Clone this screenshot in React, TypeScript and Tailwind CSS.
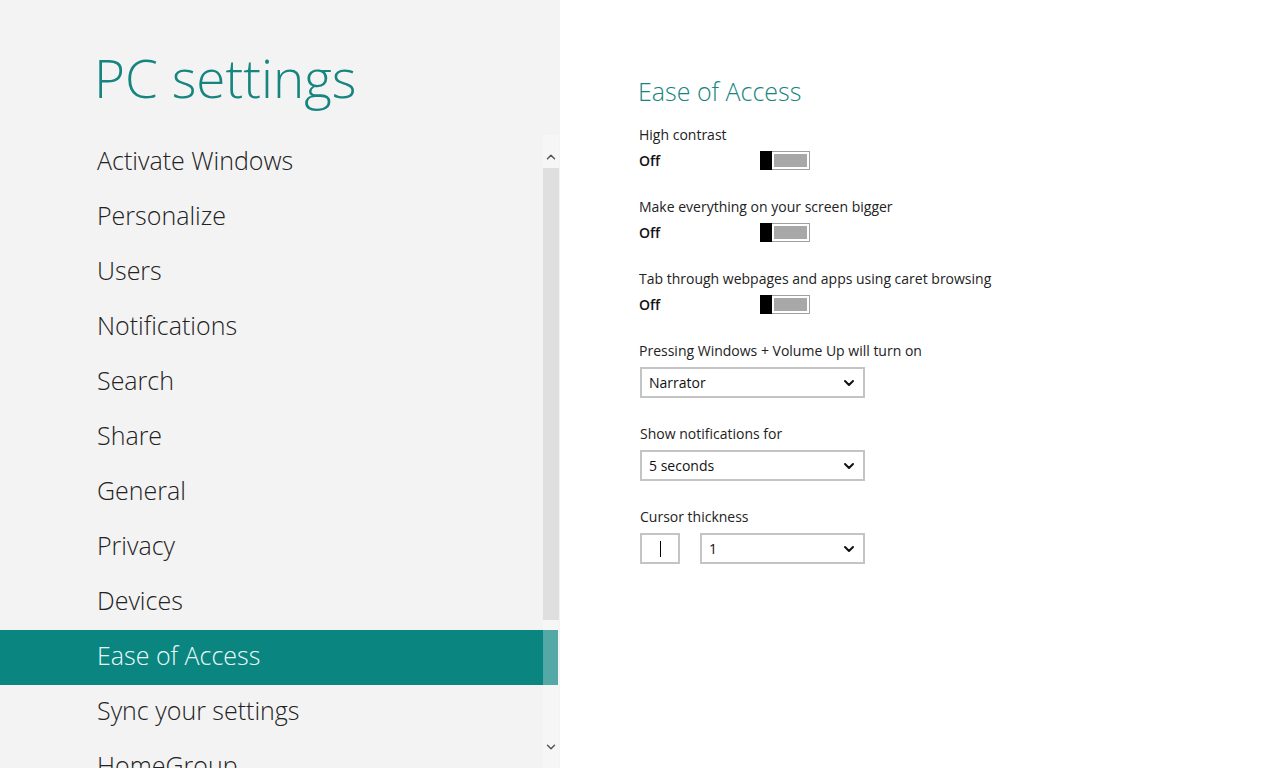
import { ChevronDown, ChevronUp } from 'lucide-react';

const menu = [
  'Activate Windows',
  'Personalize',
  'Users',
  'Notifications',
  'Search',
  'Share',
  'General',
  'Privacy',
  'Devices',
  'Ease of Access',
  'Sync your settings',
  'HomeGroup',
];

function Toggle() {
  return (
    <div className="flex items-center gap-[47px]">
      <span className="w-[74px] text-[14px] font-semibold text-[#111]">Off</span>
      <div className="flex h-[19px] w-[50px] border border-[#a0a0a0] bg-white">
        <div className="-ml-px -mt-px h-[19px] w-[12px] bg-black" />
        <div className="m-[2px] flex-1 bg-[#a8a8a8]" />
      </div>
    </div>
  );
}

function Select({ value, width }: { value: string; width: string }) {
  return (
    <div className={`flex h-[31px] items-center justify-between border-2 border-[#c4c4c4] bg-white pl-[7px] pr-[6px] text-[14px] text-[#111] ${width}`}>
      <span>{value}</span>
      <ChevronDown size={16} strokeWidth={3} className="text-[#111]" />
    </div>
  );
}

export default function App() {
  return (
    <div className="flex h-[768px] w-[1280px] overflow-hidden bg-white font-['Open_Sans',sans-serif]">
      {/* Left navigation */}
      <div className="relative flex w-[560px] shrink-0 flex-col bg-[#f3f3f3]">
        <div className="h-[135px] shrink-0 pl-[94px] pt-[44px]">
          <h1 className="text-[53px] font-light leading-[68px] text-[#16857f]">PC settings</h1>
        </div>
        <div className="w-[558px] shrink-0">
          {menu.map((item) => (
            <div
              key={item}
              className={
                item === 'Ease of Access'
                  ? 'flex h-[55px] items-center bg-[#0b8580] pb-[3px] pl-[97px] text-[25px] font-light text-[#eafafa]'
                  : 'flex h-[55px] items-center pb-[3px] pl-[97px] text-[25px] font-light text-[#222]'
              }
            >
              {item}
            </div>
          ))}
        </div>

        {/* Scrollbar overlay */}
        <div className="absolute bottom-0 left-[543px] top-[135px] flex w-[16px] flex-col bg-white/30">
          <div className="flex h-[33px] items-end justify-center pb-[4px]">
            <ChevronUp size={14} strokeWidth={2.5} className="text-[#555]" />
          </div>
          <div className="h-[452px] bg-black/[0.09]" />
          <div className="flex-1" />
          <div className="flex h-[45px] items-center justify-center pt-[2px]">
            <ChevronDown size={14} strokeWidth={2.5} className="text-[#555]" />
          </div>
        </div>
      </div>

      {/* Right content */}
      <div className="flex flex-col pl-[78px] pt-[74px]">
        <h2 className="text-[25px] font-light leading-[34px] text-[#16857f]">Ease of Access</h2>

        <div className="mt-[17px] flex flex-col text-[14px] text-[#222]">
          <div className="h-[72px]">
            <div className="pl-px leading-[20px]">High contrast</div>
            <div className="mt-[5px] pl-px"><Toggle /></div>
          </div>
          <div className="h-[72px]">
            <div className="pl-px leading-[20px]">Make everything on your screen bigger</div>
            <div className="mt-[5px] pl-px"><Toggle /></div>
          </div>
          <div className="h-[72px]">
            <div className="pl-px leading-[20px]">Tab through webpages and apps using caret browsing</div>
            <div className="mt-[5px] pl-px"><Toggle /></div>
          </div>

          <div className="h-[83px]">
            <div className="pl-px leading-[20px]">Pressing Windows + Volume Up will turn on</div>
            <div className="mt-[6px] pl-[2px]"><Select value="Narrator" width="w-[225px]" /></div>
          </div>
          <div className="h-[83px]">
            <div className="pl-[2px] leading-[20px]">Show notifications for</div>
            <div className="mt-[6px] pl-[2px]"><Select value="5 seconds" width="w-[225px]" /></div>
          </div>
          <div>
            <div className="pl-[2px] leading-[20px]">Cursor thickness</div>
            <div className="mt-[6px] flex gap-[20px] pl-[2px]">
              <div className="flex h-[31px] w-[40px] items-center justify-center border-2 border-[#c4c4c4] bg-white">
                <div className="h-[16px] w-px bg-black" />
              </div>
              <Select value="1" width="w-[165px]" />
            </div>
          </div>
        </div>
      </div>
    </div>
  );
}
